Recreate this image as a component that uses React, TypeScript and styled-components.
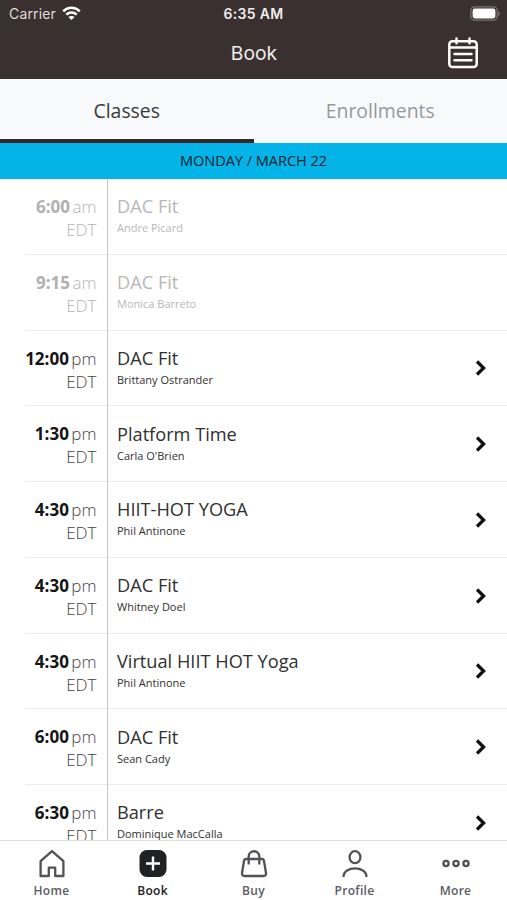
import React from "react";
import styled, { createGlobalStyle } from "styled-components";

const GlobalStyle = createGlobalStyle`
  * { box-sizing: border-box; }
  body { margin: 0; background: #fff; overflow: hidden; }
`;

const Screen = styled.div`
  width: 507px;
  height: 900px;
  display: flex;
  flex-direction: column;
  overflow: hidden;
  background: #fff;
  color: #2c2c2e;
  font-family: "Open Sans", sans-serif;
`;

const Header = styled.header`
  flex: none;
  height: 79px;
  background: #3a302f;
  color: #efeceb;
`;

const StatusBar = styled.div`
  height: 27px;
  display: grid;
  grid-template-columns: 1fr auto 1fr;
  align-items: center;
  padding: 0 7px 0 9px;
  font-family: Inter, sans-serif;
  font-size: 14px;
`;

const Carrier = styled.div`
  display: flex;
  align-items: center;
  gap: 6px;
  letter-spacing: 0.15px;
  color: #e0dcda;
`;

const Clock = styled.div`
  font-weight: 600;
  letter-spacing: 0.35px;
  transform: translateX(-1px);
`;

const BatterySlot = styled.div`
  display: flex;
  justify-content: flex-end;
`;

const TitleBar = styled.div`
  height: 52px;
  display: grid;
  grid-template-columns: 1fr auto 1fr;
  align-items: center;
  padding: 0 28px;
`;

const Title = styled.h1`
  grid-column: 2;
  margin: 0;
  font-family: Inter, sans-serif;
  font-weight: 400;
  font-size: 19.3px;
  line-height: 52px;
  transform: translateX(0.5px);
`;

const CalendarButton = styled.button`
  justify-self: end;
  display: flex;
  padding: 0;
  border: 0;
  background: none;
  color: #fffdf9;
`;

const Tabs = styled.nav`
  flex: none;
  height: 64px;
  display: grid;
  grid-template-columns: 1fr 1fr;
  background: #f8f9fb;
`;

const Tab = styled.button<{ $active?: boolean }>`
  border: 0;
  border-bottom: 4px solid ${(p) => (p.$active ? "#33292b" : "transparent")};
  padding: 4px 0 0;
  background: none;
  font: 400 19.4px/1 "Open Sans", sans-serif;
  color: ${(p) => (p.$active ? "#39393b" : "#98989c")};
`;

const DateBar = styled.div`
  flex: none;
  height: 36px;
  background: #04b3e8;
  color: #06232d;
  text-align: center;
  font-size: 14.5px;
  line-height: 36px;
`;

const List = styled.main`
  flex: 1;
  min-height: 0;
  overflow: hidden;
`;

const Row = styled.div<{ $past?: boolean }>`
  height: 75.75px;
  display: grid;
  grid-template-columns: 82.5px 1fr auto;
  margin-left: 25px;
  border-bottom: 1.5px solid #ececec;
  color: ${(p) => (p.$past ? "#b7b7b7" : "#303030")};
`;

const TimeCell = styled.div<{ $past?: boolean }>`
  padding: 16px 10px 0 0;
  margin-left: -10px;
  height: 75.75px;
  border-right: 1.5px solid #c4c4c4;
  text-align: right;
  white-space: nowrap;
  font-size: 17px;
  font-weight: 300;
  line-height: 23px;
  color: ${(p) => (p.$past ? "#b4b4b4" : "#444")};
  strong {
    margin-right: 2.5px;
    font-weight: 700;
    color: ${(p) => (p.$past ? "#b0b0b0" : "#151515")};
  }
`;

const ClassCell = styled.div`
  padding: 15.4px 0 0 9.5px;
  white-space: nowrap;
`;

const ClassName = styled.div`
  font-size: 18.2px;
  line-height: 25px;
`;

const Teacher = styled.div`
  font-size: 11px;
  line-height: 18px;
`;

const Go = styled.div`
  display: flex;
  align-items: center;
  padding: 0 20px 0 0;
  color: #111;
`;

const TabBar = styled.footer`
  flex: none;
  height: 60px;
  display: grid;
  grid-template-columns: repeat(5, 1fr);
  border-top: 1px solid #dedede;
  background: #fff;
  padding: 0 1px;
`;

const NavItem = styled.button<{ $active?: boolean }>`
  display: flex;
  flex-direction: column;
  align-items: center;
  gap: 5px;
  padding: 8px 0 0;
  border: 0;
  background: none;
  font: 600 12px/16px "Open Sans", sans-serif;
  letter-spacing: 0.3px;
  color: ${(p) => (p.$active ? "#202123" : "#5a5c5f")};
`;

const Wifi = () => (
  <svg width="19" height="15" viewBox="0 0 19 15" fill="none" stroke="#fff" strokeWidth="2.5">
    <path d="M1.2 5.3C5.9.7 13.1.7 17.8 5.3" />
    <path d="M4.3 8.6C7.3 5.8 11.7 5.8 14.7 8.6" />
    <path d="M9.5 14 6.4 11C8.2 9.5 10.8 9.5 12.6 11Z" fill="#fff" stroke="none" />
  </svg>
);

const Battery = () => (
  <svg width="30" height="15" viewBox="0 0 30 15">
    <rect x="0.8" y="0.8" width="26.4" height="13.4" rx="4" fill="none" stroke="#7c7472" strokeWidth="1.2" />
    <rect x="2.6" y="2.6" width="22.8" height="9.8" rx="2.3" fill="#fff" />
    <path d="M28.3 5.2C30.4 6 30.4 9 28.3 9.8Z" fill="#7c7472" />
  </svg>
);

const Calendar = () => (
  <svg width="32" height="32" viewBox="0 0 32 32" fill="none" stroke="currentColor" strokeWidth="2.5" strokeLinecap="round">
    <rect x="2.3" y="4.2" width="27.4" height="25.8" rx="3" />
    <path d="M9.5 1.6v4.6M22.5 1.6v4.6M3 10.5h26M7.5 17h17M7.5 23.2h17" />
  </svg>
);

const Chevron = () => (
  <svg width="13" height="18" viewBox="0 0 13 18" fill="none" stroke="currentColor" strokeWidth="3.3">
    <path d="M3 2.5 9.6 9 3 15.5" />
  </svg>
);

const icons: Record<string, React.ReactNode> = {
  Home: (
    <path d="M2.6 12.2 14 2.2 25.4 12.2V27H17.2V18.7H10.8V27H2.6Z" />
  ),
  Book: (
    <>
      <rect x="0.5" y="1" width="27" height="27" rx="7.5" fill="#202123" stroke="none" />
      <path d="M14 7.5v14M7 14.5h14" stroke="#fff" strokeWidth="2.4" />
    </>
  ),
  Buy: (
    <>
      <path d="M6.2 10H21.8Q23.7 10 24 12L26 24Q26.2 27 23.5 27H4.5Q1.8 27 2 24L4 12Q4.3 10 6.2 10Z" />
      <path d="M8.7 15.5V7.5C8.7.5 19.3.5 19.3 7.5V15.5" />
    </>
  ),
  Profile: (
    <>
      <ellipse cx="14" cy="8.2" rx="5.4" ry="6" />
      <path d="M2.5 28C2.5 16.5 25.5 16.5 25.5 28" />
    </>
  ),
  More: (
    <>
      <circle cx="4" cy="14.5" r="2.6" />
      <circle cx="14" cy="14.5" r="2.6" />
      <circle cx="24" cy="14.5" r="2.6" />
    </>
  ),
};

const NavIcon = ({ name }: { name: string }) => (
  <svg width="28" height="29" viewBox="0 0 28 29" fill="none" stroke="#505255" strokeWidth="2.3" strokeLinejoin="round">
    {icons[name]}
  </svg>
);

const classes = [
  { time: "6:00", half: "am", name: "DAC Fit", teacher: "Andre Picard", past: true },
  { time: "9:15", half: "am", name: "DAC Fit", teacher: "Monica Barreto", past: true },
  { time: "12:00", half: "pm", name: "DAC Fit", teacher: "Brittany Ostrander" },
  { time: "1:30", half: "pm", name: "Platform Time", teacher: "Carla O'Brien" },
  { time: "4:30", half: "pm", name: "HIIT-HOT YOGA", teacher: "Phil Antinone" },
  { time: "4:30", half: "pm", name: "DAC Fit", teacher: "Whitney Doel" },
  { time: "4:30", half: "pm", name: "Virtual HIIT HOT Yoga", teacher: "Phil Antinone" },
  { time: "6:00", half: "pm", name: "DAC Fit", teacher: "Sean Cady" },
  { time: "6:30", half: "pm", name: "Barre", teacher: "Dominique MacCalla" },
];

export default function App() {
  return (
    <Screen>
      <GlobalStyle />
      <Header>
        <StatusBar>
          <Carrier>Carrier<Wifi /></Carrier>
          <Clock>6:35 AM</Clock>
          <BatterySlot><Battery /></BatterySlot>
        </StatusBar>
        <TitleBar>
          <Title>Book</Title>
          <CalendarButton aria-label="Calendar"><Calendar /></CalendarButton>
        </TitleBar>
      </Header>
      <Tabs>
        <Tab $active>Classes</Tab>
        <Tab>Enrollments</Tab>
      </Tabs>
      <DateBar>MONDAY / MARCH 22</DateBar>
      <List>
        {classes.map((c, i) => (
          <Row key={i} $past={c.past}>
            <TimeCell $past={c.past}>
              <strong>{c.time}</strong>{c.half}
              <div>EDT</div>
            </TimeCell>
            <ClassCell>
              <ClassName>{c.name}</ClassName>
              <Teacher>{c.teacher}</Teacher>
            </ClassCell>
            {!c.past && <Go><Chevron /></Go>}
          </Row>
        ))}
      </List>
      <TabBar>
        {Object.keys(icons).map((n) => (
          <NavItem key={n} $active={n === "Book"}>
            <NavIcon name={n} />
            {n}
          </NavItem>
        ))}
      </TabBar>
    </Screen>
  );
}
